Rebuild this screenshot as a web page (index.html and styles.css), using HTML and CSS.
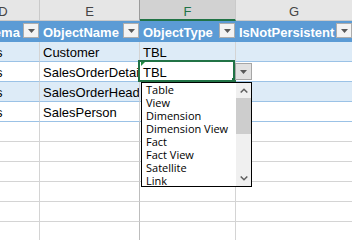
FILE: index.html
```html
<!DOCTYPE html>
<html>
<head>
<meta charset="utf-8">
<link rel="stylesheet" href="styles.css">
</head>
<body>
<div class="sheet">
  <div class="ch">D</div>
  <div class="ch pre">E</div>
  <div class="ch sel">F</div>
  <div class="ch">G</div>

  <div class="th"><span class="t">Schema</span><span class="fb"><svg width="7" height="4" viewBox="0 0 7 4"><path d="M0 0h7L3.5 4z" fill="#595959"/></svg></span></div>
  <div class="th"><span class="t">ObjectName</span><span class="fb"><svg width="7" height="4" viewBox="0 0 7 4"><path d="M0 0h7L3.5 4z" fill="#595959"/></svg></span></div>
  <div class="th"><span class="t">ObjectType</span><span class="fb"><svg width="7" height="4" viewBox="0 0 7 4"><path d="M0 0h7L3.5 4z" fill="#595959"/></svg></span></div>
  <div class="th"><span class="t">IsNotPersistent</span><span class="fb"><svg width="7" height="4" viewBox="0 0 7 4"><path d="M0 0h7L3.5 4z" fill="#595959"/></svg></span></div>

  <div class="c tb band">Sales</div>
  <div class="c tb band">Customer</div>
  <div class="c tb band">TBL</div>
  <div class="c tb band"></div>

  <div class="c tb">Sales</div>
  <div class="c tb">SalesOrderDetail</div>
  <div class="c tb active">
    <span class="v">TBL</span>
    <span class="err"></span>
    <span class="selbox"></span>
    <span class="fill"></span>
    <span class="dd"><svg width="7" height="4" viewBox="0 0 7 4"><path d="M0 0h7L3.5 4z" fill="#595959"/></svg></span>
    <div class="list">
      <ul class="items">
        <li>Table</li>
        <li>View</li>
        <li>Dimension</li>
        <li>Dimension View</li>
        <li>Fact</li>
        <li>Fact View</li>
        <li>Satellite</li>
        <li>Link</li>
      </ul>
      <div class="sb">
        <div class="sbb"><svg width="8" height="5" viewBox="0 0 8 5"><polyline points="0.7,4.5 4,1.2 7.3,4.5" fill="none" stroke="#606060" stroke-width="1.5"/></svg></div>
        <div class="thumb"></div>
        <div class="track"></div>
        <div class="sbb"><svg width="8" height="5" viewBox="0 0 8 5"><polyline points="0.7,0.5 4,3.8 7.3,0.5" fill="none" stroke="#606060" stroke-width="1.5"/></svg></div>
      </div>
    </div>
  </div>
  <div class="c tb"></div>

  <div class="c tb band">Sales</div>
  <div class="c tb band">SalesOrderHeader</div>
  <div class="c tb band"></div>
  <div class="c tb band"></div>

  <div class="c tb">Sales</div>
  <div class="c tb">SalesPerson</div>
  <div class="c tb"></div>
  <div class="c tb"></div>

  <div class="c"></div><div class="c ef"></div><div class="c"></div><div class="c"></div>
  <div class="c"></div><div class="c ef"></div><div class="c"></div><div class="c"></div>
  <div class="c"></div><div class="c ef"></div><div class="c"></div><div class="c"></div>
  <div class="c"></div><div class="c ef"></div><div class="c"></div><div class="c"></div>
  <div class="c"></div><div class="c ef"></div><div class="c"></div><div class="c"></div>
  <div class="c"></div><div class="c ef"></div><div class="c"></div><div class="c"></div>
</div>
</body>
</html>
```

FILE: styles.css
```css
html, body {
  margin: 0;
  padding: 0;
  overflow: hidden;
}
body {
  width: 352px;
  height: 240px;
  background: #fff;
  font-family: "Liberation Sans", Arial, sans-serif;
  font-size: 13px;
  color: #000;
}
.sheet {
  display: grid;
  grid-template-columns: 73px 100px 96px 117px;
  margin-left: -33px;
}
.ch {
  box-sizing: border-box;
  height: 21px;
  padding-top: 4px;
  line-height: 16px;
  text-align: center;
  background: #e6e6e6;
  color: #444;
  border-right: 1px solid #cacaca;
  border-bottom: 1px solid #cacaca;
}
.ch.pre {
  border-right-color: #9b9b9b;
}
.ch.sel {
  background: #d2d2d2;
  color: #217346;
  border-bottom: 2px solid #217346;
}
.th {
  box-sizing: border-box;
  height: 21px;
  display: flex;
  align-items: flex-start;
  background: #5b9bd5;
  color: #fff;
  font-weight: bold;
  padding: 0 1px 0 3px;
  border-bottom: 1px solid #5b9bd5;
}
.th .t {
  flex: 1;
  min-width: 0;
  overflow: hidden;
  white-space: nowrap;
  padding-top: 3px;
  line-height: 17px;
}
.fb {
  flex: none;
  box-sizing: border-box;
  width: 16px;
  height: 15px;
  margin-top: 2px;
  background: #f3f3f3;
  border: 1px solid #adadad;
  display: flex;
  align-items: center;
  justify-content: center;
}
.c {
  box-sizing: border-box;
  height: 20px;
  padding: 2px 2px 0 3px;
  line-height: 17px;
  white-space: nowrap;
  overflow: hidden;
  border-right: 1px solid #d4d4d4;
  border-bottom: 1px solid #d4d4d4;
}
.c.tb {
  border-bottom-color: #9bc2e6;
}
.c.band {
  background: #ddebf7;
}
.c.ef {
  border-right-color: #bdbdbd;
}
.c.active {
  position: relative;
  overflow: visible;
}
.err {
  position: absolute;
  left: 1px;
  top: 0;
  width: 0;
  height: 0;
  border-top: 4px solid #1e8a3e;
  border-right: 4px solid transparent;
  z-index: 3;
}
.selbox {
  position: absolute;
  left: -2px;
  top: -2px;
  width: 97px;
  height: 22px;
  box-sizing: border-box;
  border: 2px solid #217346;
  z-index: 2;
}
.fill {
  position: absolute;
  left: 92px;
  top: 16px;
  width: 4px;
  height: 4px;
  background: #217346;
  z-index: 3;
}
.dd {
  position: absolute;
  left: 95px;
  top: 1px;
  width: 17px;
  height: 17px;
  box-sizing: border-box;
  background: #e1e1e1;
  border: 1px solid #a6a6a6;
  display: flex;
  align-items: center;
  justify-content: center;
  z-index: 3;
}
.list {
  position: absolute;
  left: 1px;
  top: 20px;
  width: 111px;
  height: 105px;
  box-sizing: border-box;
  border: 1px solid #000;
  background: #fff;
  display: flex;
  z-index: 4;
  font-family: "Open Sans", "Liberation Sans", sans-serif;
  font-size: 11px;
  color: #000;
}
.items {
  flex: 1;
  margin: 0;
  padding: 0 0 0 4px;
  list-style: none;
  overflow: hidden;
}
.items li {
  height: 13px;
  line-height: 13px;
  white-space: nowrap;
}
.sb {
  flex: none;
  width: 15px;
  background: #f0f0f0;
  display: flex;
  flex-direction: column;
}
.sbb {
  height: 15px;
  flex: none;
  display: flex;
  align-items: center;
  justify-content: center;
}
.thumb {
  height: 36px;
  flex: none;
  background: #cdcdcd;
}
.track {
  flex: 1;
}
```
